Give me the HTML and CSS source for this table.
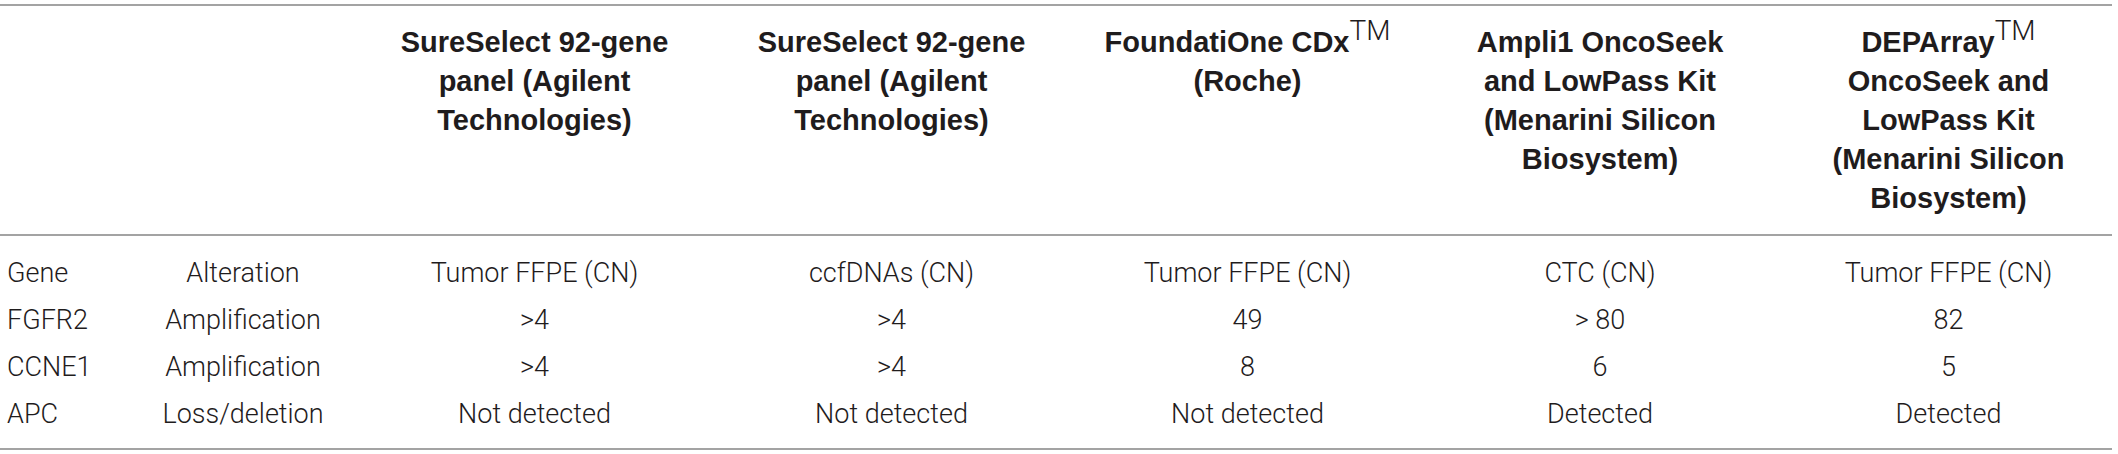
FILE: index.html
```html
<!DOCTYPE html>
<html lang="en">
<head>
<meta charset="utf-8">
<title>Copy number comparison</title>
<link rel="stylesheet" href="styles.css">
</head>
<body>
<table class="cmp">
  <colgroup>
    <col class="c-gene">
    <col class="c-alt">
    <col class="c-a">
    <col class="c-b">
    <col class="c-c">
    <col class="c-d">
    <col class="c-e">
  </colgroup>
  <thead>
    <tr class="head">
      <th class="left"></th>
      <th></th>
      <th>SureSelect 92-gene<br>panel (Agilent<br>Technologies)</th>
      <th>SureSelect 92-gene<br>panel (Agilent<br>Technologies)</th>
      <th>FoundatiOne CDx<span class="tm">TM</span><br>(Roche)</th>
      <th>Ampli1 OncoSeek<br>and LowPass Kit<br>(Menarini Silicon<br>Biosystem)</th>
      <th class="last">DEPArray<span class="tm">TM</span><br>OncoSeek and<br>LowPass Kit<br>(Menarini Silicon<br>Biosystem)</th>
    </tr>
  </thead>
  <tbody>
    <tr class="first">
      <td class="left">Gene</td>
      <td>Alteration</td>
      <td>Tumor FFPE (CN)</td>
      <td>ccfDNAs (CN)</td>
      <td>Tumor FFPE (CN)</td>
      <td>CTC (CN)</td>
      <td class="last">Tumor FFPE (CN)</td>
    </tr>
    <tr>
      <td class="left">FGFR2</td>
      <td>Amplification</td>
      <td>&gt;4</td>
      <td>&gt;4</td>
      <td>49</td>
      <td>&gt; 80</td>
      <td class="last">82</td>
    </tr>
    <tr>
      <td class="left">CCNE1</td>
      <td>Amplification</td>
      <td>&gt;4</td>
      <td>&gt;4</td>
      <td>8</td>
      <td>6</td>
      <td class="last">5</td>
    </tr>
    <tr class="final">
      <td class="left">APC</td>
      <td>Loss/deletion</td>
      <td>Not detected</td>
      <td>Not detected</td>
      <td>Not detected</td>
      <td>Detected</td>
      <td class="last">Detected</td>
    </tr>
  </tbody>
</table>
</body>
</html>
```
FILE: styles.css
```css
html, body {
  margin: 0;
  padding: 0;
  background: #ffffff;
}

body {
  font-family: "Liberation Sans", Arial, sans-serif;
  color: #1f1c1d;
}

.cmp {
  width: 2112px;
  margin-top: 4px;
  border-collapse: collapse;
  table-layout: fixed;
  border-top: 2px solid #a3a3a3;
  border-bottom: 2px solid #a3a3a3;
}

.c-gene { width: 130px; }
.c-alt { width: 226px; }
.c-a { width: 357px; }
.c-b { width: 357px; }
.c-c { width: 355px; }
.c-d { width: 350px; }
.c-e { width: 337px; }

.head th {
  font-size: 29px;
  font-weight: bold;
  line-height: 39px;
  text-align: center;
  vertical-align: top;
  padding: 17px 0 16px 0;
  border-bottom: 2px solid #a3a3a3;
}

.tm {
  font-family: Roboto, "Liberation Sans", sans-serif;
  font-weight: 300;
  font-size: 28px;
  line-height: 0;
  vertical-align: 12px;
}

td {
  font-family: Roboto, "Liberation Sans", sans-serif;
  font-weight: 300;
  font-size: 27px;
  line-height: 47px;
  text-align: center;
  padding: 0;
  white-space: nowrap;
}

.first td { padding-top: 14px; }
.final td { padding-bottom: 10px; }

td.left, th.left {
  text-align: left;
  padding-left: 7px;
}

td.last, th.last {
  padding-left: 10px;
}
```
